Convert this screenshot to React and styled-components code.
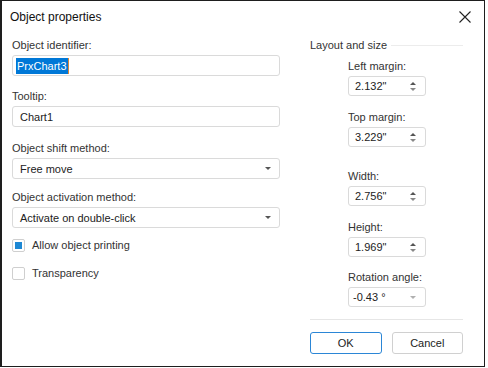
import React from 'react';
import styled, { createGlobalStyle } from 'styled-components';

const Global = createGlobalStyle`
  html, body {
    margin: 0;
    padding: 0;
    background: #fff;
  }
  body {
    font-family: "Liberation Sans", Arial, sans-serif;
    font-size: 11px;
    color: #333;
  }
`

const Dialog = styled.div`
  box-sizing: border-box;
  width: 485px;
  height: 367px;
  border: 1px solid #1e1e1e;
  border-left-width: 2px;
  background: #fff;
  display: flex;
  flex-direction: column;
`

const TitleBar = styled.div`
  height: 31px;
  display: flex;
  align-items: center;
  justify-content: space-between;
  padding: 0 13px 0 8px;
`

const Title = styled.div`
  font-size: 12px;
  color: #111;
`

const Close = styled.div`
  width: 12px;
  height: 12px;
  display: flex;
`

const Body = styled.div`
  display: flex;
  gap: 30px;
  padding: 4px 0 0 10px;
`

const Column = styled.div`
  width: ${props => props.width}px;
  display: flex;
  flex-direction: column;
`

const Field = styled.div`
  display: flex;
  flex-direction: column;
  margin-top: ${props => props.mt || 0}px;
  padding-left: ${props => props.indent || 0}px;
`

const Label = styled.div`
  line-height: 16px;
  margin-bottom: 2px;
`

const Box = styled.div`
  box-sizing: border-box;
  width: ${props => props.width ? props.width + 'px' : '100%'};
  height: ${props => props.h || 21}px;
  border: 1px solid #dadada;
  border-radius: 3px;
  display: flex;
  align-items: center;
  justify-content: space-between;
  padding: 0 ${props => props.pr || 8}px 0 ${props => props.pl || 7}px;
  color: #222;
  background: #fff;
`

const Selected = styled.span`
  background: #0078d7;
  color: #fff;
  line-height: 16px;
  padding: 0 1px;
  margin-left: -3px;
  border-right: 1px solid #d9873a;
`

const Caret = styled.div`
  width: 0;
  height: 0;
  border-left: 3px solid transparent;
  border-right: 3px solid transparent;
  border-top: 3px solid ${props => props.light ? '#b0b0b0' : '#555'};
`

const Spin = styled.div`
  display: flex;
  flex-direction: column;
  gap: 3px;
  align-items: center;
`

const UpArrow = styled.div`
  width: 0;
  height: 0;
  border-left: 3px solid transparent;
  border-right: 3px solid transparent;
  border-bottom: 3px solid #555;
`

const DownArrow = styled.div`
  width: 0;
  height: 0;
  border-left: 3px solid transparent;
  border-right: 3px solid transparent;
  border-top: 3px solid #888;
`

const CheckRow = styled.div`
  display: flex;
  align-items: center;
  gap: 7px;
  line-height: 16px;
  margin-top: ${props => props.mt || 0}px;
`

const CheckBox = styled.div`
  box-sizing: border-box;
  width: 13px;
  height: 13px;
  border: 1px solid #cfcfcf;
  border-radius: 2px;
  display: flex;
  align-items: center;
  justify-content: center;
  &::after {
    content: '';
    display: ${props => props.checked ? 'block' : 'none'};
    width: 7px;
    height: 7px;
    background: #1e88d4;
  }
`

const GroupHead = styled.div`
  display: flex;
  align-items: center;
  gap: 4px;
  line-height: 16px;
  margin-top: 1px;
  &::after {
    content: '';
    flex: 1;
    height: 1px;
    background: #ececec;
  }
`

const Separator = styled.div`
  height: 1px;
  background: #e6e6e6;
  margin-top: 12px;
`

const Buttons = styled.div`
  display: flex;
  gap: 10px;
  margin-top: 12px;
`

const Button = styled.div`
  box-sizing: border-box;
  width: 72px;
  height: 22px;
  border: 1px solid ${props => props.primary ? '#2b86d6' : '#d0d0d0'};
  border-radius: 3px;
  display: flex;
  align-items: center;
  justify-content: center;
  color: #222;
`

const Select = ({ value }) => (
  <Box pr={8}>
    <span>{value}</span>
    <Caret />
  </Box>
)

const Spinner = ({ value }) => (
  <Box width={78} h={20} pl={6} pr={9}>
    <span>{value}</span>
    <Spin>
      <UpArrow />
      <DownArrow />
    </Spin>
  </Box>
)

const App = () => {
  return (
    <>
      <Global />
      <Dialog>
        <TitleBar>
          <Title>Object properties</Title>
          <Close>
            <svg width="12" height="12" viewBox="0 0 12 12">
              <path d="M0.5 0.5 L11.5 11.5 M11.5 0.5 L0.5 11.5" stroke="#222" strokeWidth="1.1" fill="none" />
            </svg>
          </Close>
        </TitleBar>
        <Body>
          <Column width={268}>
            <Field mt={1}>
              <Label>Object identifier:</Label>
              <Box pl={6}><Selected>PrxChart3</Selected></Box>
            </Field>
            <Field mt={12}>
              <Label>Tooltip:</Label>
              <Box>Chart1</Box>
            </Field>
            <Field mt={13}>
              <Label>Object shift method:</Label>
              <Select value="Free move" />
            </Field>
            <Field mt={10}>
              <Label>Object activation method:</Label>
              <Select value="Activate on double-click" />
            </Field>
            <CheckRow mt={9}>
              <CheckBox checked />
              Allow object printing
            </CheckRow>
            <CheckRow mt={12}>
              <CheckBox />
              Transparency
            </CheckRow>
          </Column>
          <Column width={153}>
            <GroupHead>Layout and size</GroupHead>
            <Field mt={5} indent={38}>
              <Label>Left margin:</Label>
              <Spinner value={'2.132"'} />
            </Field>
            <Field mt={13} indent={38}>
              <Label>Top margin:</Label>
              <Spinner value={'3.229"'} />
            </Field>
            <Field mt={21} indent={38}>
              <Label>Width:</Label>
              <Spinner value={'2.756"'} />
            </Field>
            <Field mt={13} indent={38}>
              <Label>Height:</Label>
              <Spinner value={'1.969"'} />
            </Field>
            <Field mt={12} indent={38}>
              <Label>Rotation angle:</Label>
              <Box width={78} h={20} pl={4} pr={9}>
                <span>-0.43 °</span>
                <Caret light />
              </Box>
            </Field>
            <Separator />
            <Buttons>
              <Button primary>OK</Button>
              <Button>Cancel</Button>
            </Buttons>
          </Column>
        </Body>
      </Dialog>
    </>
  );
}

export default App;
